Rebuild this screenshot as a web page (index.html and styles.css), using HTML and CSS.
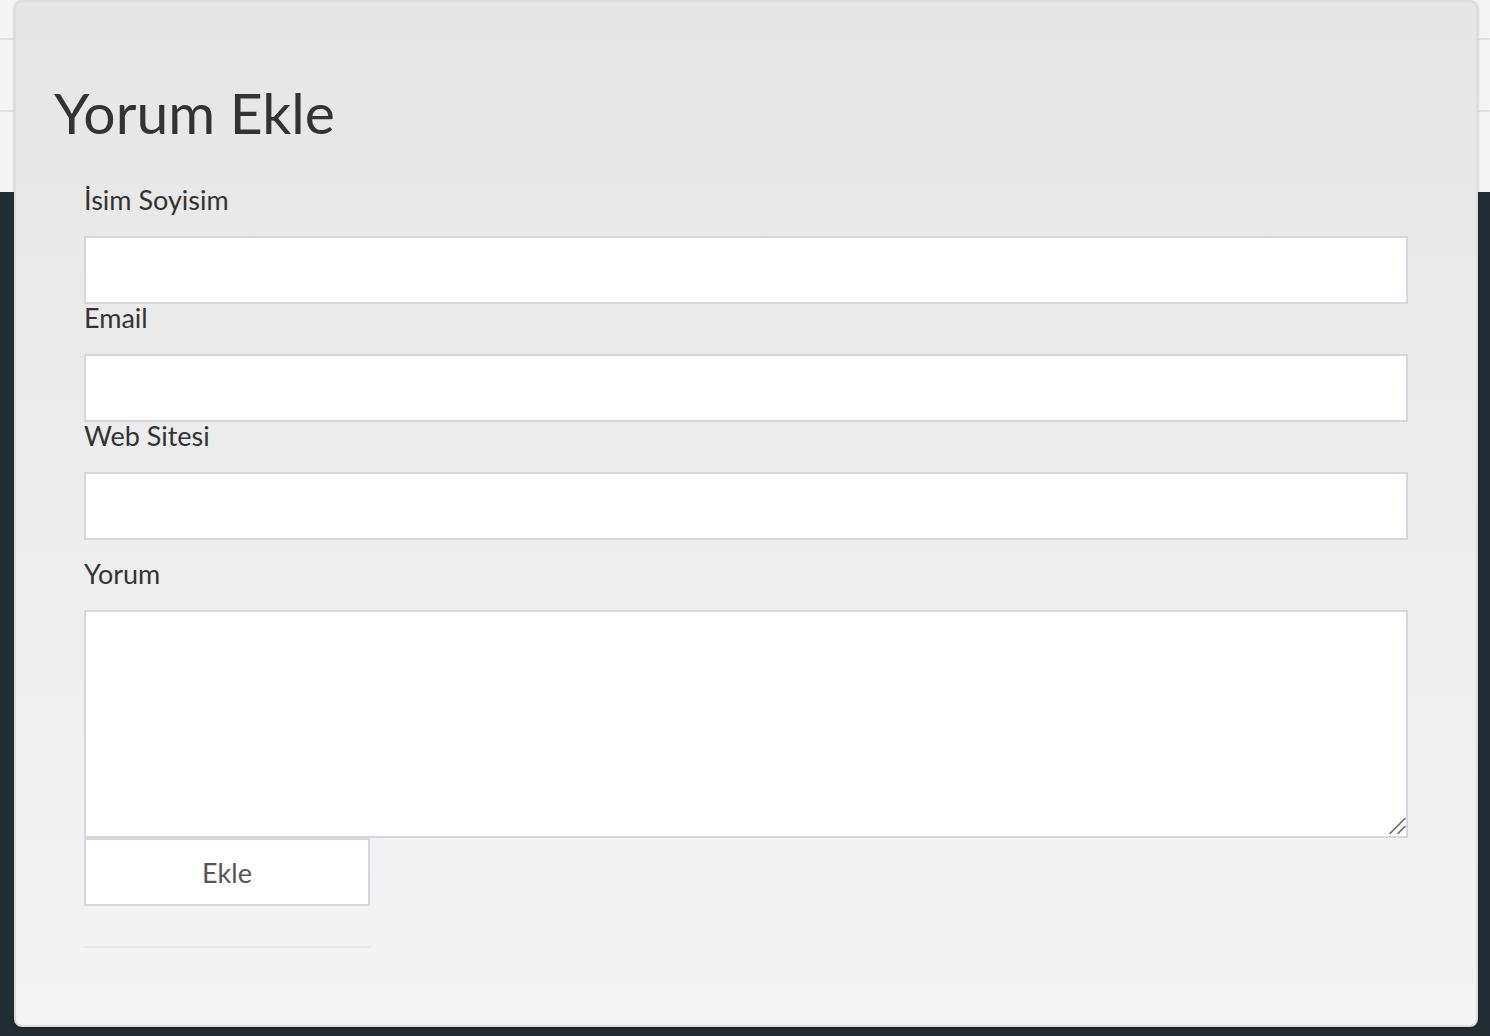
FILE: index.html
```html
<!DOCTYPE html>
<html lang="tr">
<head>
<meta charset="utf-8">
<title>Yorum Ekle</title>
<link rel="stylesheet" href="styles.css">
</head>
<body>
<div class="page">
  <header class="topbar">
    <div class="topbar-row topbar-row-1"></div>
    <div class="topbar-row topbar-row-2"></div>
  </header>
  <main class="page-main"></main>
</div>

<div class="modal">
  <h1 class="modal-title">Yorum Ekle</h1>
  <form class="comment-form">
    <label class="field-label" for="name">İsim Soyisim</label>
    <input class="field-input" id="name" type="text">
    <label class="field-label" for="email">Email</label>
    <input class="field-input" id="email" type="text">
    <label class="field-label" for="site">Web Sitesi</label>
    <input class="field-input" id="site" type="text">
    <label class="field-label field-label-comment" for="comment">Yorum</label>
    <div class="textarea-wrap">
      <textarea class="field-textarea" id="comment"></textarea>
      <svg class="resize-grip" width="20" height="20" viewBox="0 0 20 20" aria-hidden="true">
        <line x1="4" y1="17.5" x2="19" y2="2.5" stroke="#666" stroke-width="1.6" stroke-linecap="round"/>
        <line x1="12" y1="17.5" x2="19" y2="10.5" stroke="#666" stroke-width="1.6" stroke-linecap="round"/>
      </svg>
    </div>
    <button class="submit-btn" type="button">Ekle</button>
    <hr class="form-rule">
  </form>
</div>
</body>
</html>
```

FILE: styles.css
```css
* { box-sizing: border-box; }

html, body {
  margin: 0;
  padding: 0;
  height: 100%;
}

body {
  font-family: "Lato", "Liberation Sans", sans-serif;
  color: #333;
  background: #212d32;
  overflow: hidden;
}

.page {
  display: flex;
  flex-direction: column;
  height: 100%;
}

.topbar {
  height: 192px;
  background: #f4f4f4;
  display: flex;
  flex-direction: column;
}

.topbar-row {
  border-bottom: 2px solid #e2e2e2;
}

.topbar-row-1 { height: 40px; }
.topbar-row-2 { height: 72px; }

.page-main {
  flex: 1;
  background: #212d32;
}

.modal {
  position: absolute;
  top: 0;
  left: 14px;
  width: 1464px;
  height: 1027px;
  border: 2px solid #dcdcdc;
  border-radius: 8px;
  background: linear-gradient(to bottom, #e6e6e6 0%, #f4f4f4 100%);
  box-shadow: 0 1px 3px rgba(0, 0, 0, 0.2);
  padding: 0 38px;
}

.modal-title {
  margin: 76px 0 40px;
  font-size: 57px;
  line-height: 1.2;
  font-weight: 400;
  color: #333;
}

.comment-form {
  padding: 0 30px;
  display: flex;
  flex-direction: column;
  align-items: stretch;
}

.field-label {
  display: block;
  font-size: 27px;
  line-height: 28px;
  margin-bottom: 22px;
  color: #333;
  font-weight: 400;
}

.field-label-comment {
  margin-top: 20px;
}

.field-input {
  display: block;
  width: 100%;
  height: 68px;
  border: 2px solid #d4d7e0;
  background: #fff;
  margin: 0;
  font-size: 27px;
  padding: 0 16px;
}

.textarea-wrap {
  position: relative;
}

.field-textarea {
  display: block;
  width: 100%;
  height: 228px;
  border: 2px solid #d4d7e0;
  background: #fff;
  margin: 0;
  font-size: 27px;
  padding: 12px 16px;
  resize: none;
}

.resize-grip {
  position: absolute;
  right: 2px;
  bottom: 2px;
  pointer-events: none;
}

.submit-btn {
  display: block;
  width: 286px;
  height: 68px;
  border: 2px solid #d4d7e0;
  background: #fff;
  color: #555;
  font-family: "Lato", "Liberation Sans", sans-serif;
  font-size: 27px;
  margin: 0;
  padding: 0;
}

.form-rule {
  width: 286px;
  margin: 40px 0 0;
  border: 0;
  border-top: 2px solid #e9e9e9;
}
```
